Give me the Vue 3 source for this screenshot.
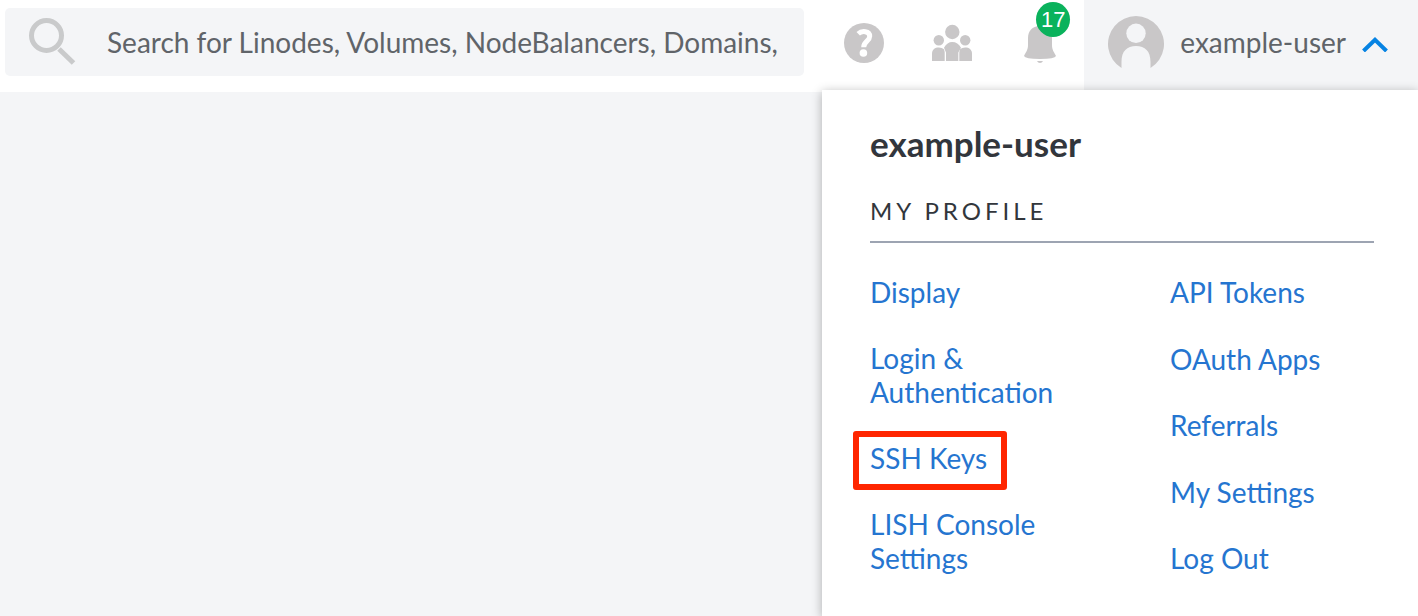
<script setup>
const leftLinks = ['Display', 'Login & Authentication', 'SSH Keys', 'LISH Console Settings']
const rightLinks = ['API Tokens', 'OAuth Apps', 'Referrals', 'My Settings', 'Log Out']
const highlighted = 'SSH Keys'
</script>

<template>
  <div class="page">
    <header class="topbar">
      <label class="search">
        <svg class="search-icon" viewBox="0 0 48 48" aria-hidden="true">
          <circle cx="17.500" cy="17.500" r="15" />
          <path d="M30 31 44.500 45" />
        </svg>
        <input type="text" aria-label="Search" placeholder="Search for Linodes, Volumes, NodeBalancers, Domains," />
      </label>
      <nav class="tools">
        <button class="tool" type="button" aria-label="Help">
          <svg width="40" height="40" viewBox="0 0 40 40">
            <circle cx="20" cy="20" r="20" fill="#c9c7c8" />
            <path d="M14.200 10.800C18 7.200 25.700 8 25.700 13.200C25.700 18 19.700 18.400 19.700 24.200" fill="none" stroke="#fff" stroke-width="5" />
            <circle cx="19.400" cy="30" r="3.800" fill="#fff" />
          </svg>
        </button>
        <button class="tool" type="button" aria-label="Community">
          <svg width="40" height="40" viewBox="0 0 40 40" fill="#c9c7c8">
            <circle cx="20.300" cy="9" r="7.200" />
            <circle cx="6.800" cy="17.200" r="5.200" />
            <circle cx="33.200" cy="17.200" r="5.200" />
            <path d="M0 38V31C0 26.500 3 24.600 6.800 24.600Q10 24.600 12 26.300L12.700 29V38Z" />
            <path d="M40 38V31C40 26.500 37 24.600 33.200 24.600Q30 24.600 28 26.300L27.300 29V38Z" />
            <path d="M14 38V29.500L12 24.700C14 20.800 17 19 20.200 19C24 19 27 20.800 29 24.700L26.300 29.500V38Z" />
          </svg>
        </button>
        <button class="tool bell" type="button" aria-label="Notifications">
          <svg width="32" height="40" viewBox="0 0 32 40" fill="#c9c7c8">
            <path d="M16 3C8 3 4 8 4 15V22C4 27 2 29 0 33Q1 36 16 36Q31 36 32 33C30 29 28 27 28 22V15C28 8 24 3 16 3Z" />
            <path d="M13 38H19Q18 40 16 40Q14 40 13 38Z" />
          </svg>
          <span class="badge">17</span>
        </button>
      </nav>
      <button class="user" type="button" aria-expanded="true">
        <svg class="avatar" width="56" height="56" viewBox="0 0 56 56">
          <path d="M13.500 52A28 28 0 1 1 42.500 52V46C42.500 35 37 30 28 30C19 30 13.500 35 13.500 46Z" fill="#c9c7c8" />
          <circle cx="28" cy="17.300" r="9.700" fill="#f4f5f7" />
        </svg>
        <span>example-user</span>
        <svg class="chevron" width="26" height="16" viewBox="0 0 26 16">
          <path d="M1.500 15 13 3.800 24.500 15" fill="none" stroke="#0683e3" stroke-width="4" />
        </svg>
      </button>
    </header>

    <section class="menu">
      <h2>example-user</h2>
      <h3>MY PROFILE</h3>
      <div class="columns">
        <ul>
          <li v-for="item in leftLinks" :key="item">
            <a href="#" :class="{ marked: item === highlighted }">{{ item }}</a>
          </li>
        </ul>
        <ul>
          <li v-for="item in rightLinks" :key="item"><a href="#">{{ item }}</a></li>
        </ul>
      </div>
    </section>
  </div>
</template>

<style>
body {
  margin: 0;
  background: #f4f5f7;
}
</style>

<style scoped>
.page {
  position: relative;
  min-height: 100vh;
  overflow: hidden;
  background: #f4f5f7;
  color: #606469;
  font-family: Lato, sans-serif;
  font-size: 28px;
  line-height: 34px;
}
button {
  border: 0;
  padding: 0;
  background: none;
  color: inherit;
  font: inherit;
  cursor: pointer;
}
svg {
  display: block;
  flex: none;
}
.topbar {
  display: flex;
  height: 92px;
  background: #fff;
}
.search {
  display: flex;
  flex: 1;
  min-width: 0;
  height: 68px;
  margin: 8px 40px 0 5px;
  box-sizing: border-box;
  padding: 0 24px;
  gap: 30px;
  align-items: center;
  border-radius: 5px;
  background: #f4f5f7;
}
.search-icon {
  width: 48px;
  height: 48px;
  fill: none;
  stroke: #c9cacb;
  stroke-width: 5;
}
.search input {
  flex: 1;
  min-width: 0;
  border: 0;
  padding: 0;
  outline: 0;
  background: none;
  color: #606469;
  font: inherit;
}
.search input::placeholder {
  color: #606469;
  opacity: 1;
}
.tools {
  display: flex;
  height: 86px;
  align-items: center;
  gap: 48px;
  margin-right: 28px;
}
.bell {
  position: relative;
  margin-left: 4px;
}
.badge {
  position: absolute;
  top: -21px;
  left: 12px;
  width: 34px;
  height: 35px;
  border-radius: 50%;
  background: #0ab25c;
  color: #fff;
  font-family: "Liberation Sans", Arial, sans-serif;
  font-size: 22px;
  line-height: 35px;
  text-align: center;
}
.user {
  display: flex;
  align-items: center;
  gap: 16px;
  padding: 0 30px 4px 24px;
  background: #f4f5f7;
}
.user span {
  padding-bottom: 4px;
}
.menu {
  position: absolute;
  top: 90px;
  right: 0;
  bottom: 0;
  width: 596px;
  box-sizing: border-box;
  padding: 32px 44px 40px 48px;
  background: #fff;
  box-shadow: 0 2px 10px rgba(0, 0, 0, 0.3);
}
h2 {
  margin: 0;
  color: #32363c;
  font-size: 35px;
  line-height: 42px;
}
h3 {
  margin: 30px 0 32px;
  padding-bottom: 13px;
  border-bottom: 2px solid #9da4b2;
  color: #32363c;
  font-size: 24px;
  font-weight: 400;
  line-height: 34px;
  letter-spacing: 4px;
}
.columns {
  display: grid;
  grid-template-columns: 1fr 1fr;
  column-gap: 96px;
}
ul {
  display: flex;
  flex-direction: column;
  justify-content: space-between;
  gap: 32px;
  margin: 0;
  padding: 0;
  list-style: none;
}
a {
  display: block;
  width: fit-content;
  color: #2575d0;
  text-decoration: none;
}
.marked {
  position: relative;
}
.marked::after {
  content: "";
  position: absolute;
  inset: -10px -20px -15px -17px;
  border: 6px solid #ff2600;
  border-radius: 3px;
}
</style>
